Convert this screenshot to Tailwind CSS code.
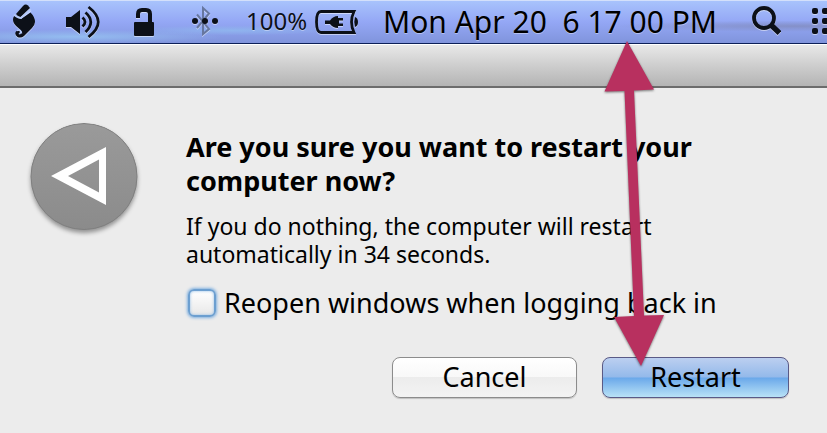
<!DOCTYPE html>
<html lang="en">
<head>
    <meta charset="UTF-8">
    <meta name="viewport" content="width=device-width, initial-scale=1.0">
    <title>Restart</title>
    <script src="https://cdn.jsdelivr.net/npm/@tailwindcss/browser@4"></script>
</head>
<body class="relative min-h-screen flex flex-col overflow-hidden bg-[#ececec] text-black font-['Noto_Sans','Open_Sans',sans-serif]">

    <!-- Menu bar -->
    <header class="flex items-center h-11 shrink-0 overflow-hidden whitespace-nowrap border-t border-t-[#d3e0fb] border-b border-b-[#0c1f58] pl-3 text-[#0c1018] bg-[radial-gradient(ellipse_at_9%_85%,#94bdf0_0%,transparent_14%),radial-gradient(ellipse_at_28%_70%,#8fb4ee_0%,transparent_12%),radial-gradient(ellipse_at_96%_60%,#8490c8_0%,transparent_16%),linear-gradient(to_bottom,#a8c3fc,#94a7f5_50%,#8094dc)]">
        <svg class="w-6 h-9 shrink-0 drop-shadow-[0_1px_0_#ffffff80]" viewBox="12 4 24 36" fill="currentColor" aria-label="Scripts">
            <path d="M16 14 L23 6 Q25.500 3.500 28 5.500 L30 8 L20.500 17 Q17.500 16.500 16 14Z"/>
            <path d="M13 20 Q13 15.500 16 15.500 Q18 18.500 21 19 L30.500 12.500 Q35 17 35 22 Q35 24.500 32 28 L24 36 Q21 38.500 17.500 37 Q14 34.500 16 31.500 Q18.500 29.500 20 32 L18.500 34 Q20 35 21 33.500 Q22.500 31 19 28.500 Q13 24 13 20Z"/>
            <path d="M14 14.500 Q17.500 18.500 21 18 L31 9.500 M17 30.500 Q21.500 29 21.500 33.500" fill="none" stroke="#b4cafb" stroke-width="1.500"/>
        </svg>
        <svg class="w-9 h-9 ml-7 shrink-0 drop-shadow-[0_1px_0_#ffffff80]" viewBox="64 4 36 36" fill="none" stroke="currentColor" stroke-width="2.800" aria-label="Volume">
            <path d="M66 17 H71 L80 10 V34 L71 27 H66Z" fill="currentColor" stroke="none"/>
            <path d="M82.500 17.500 Q87.500 22 82.500 26.500 M85.500 12.500 Q96 22 85.500 32 M88.500 7 Q108 22 88.500 37"/>
        </svg>
        <svg class="w-5 h-9 ml-[34px] shrink-0 drop-shadow-[0_1px_0_#ffffff80]" viewBox="134 4 20 36" fill="none" stroke="currentColor" aria-label="Unlocked">
            <path d="M138 18 V14 Q138 10 142 10 H146 Q150 10 150 14 V23" stroke-width="4"/>
            <rect x="134" y="22" width="20" height="14" rx="1" fill="currentColor" stroke="none"/>
        </svg>
        <svg class="w-7 h-9 ml-9 shrink-0 drop-shadow-[0_1px_0_#ffffff80]" viewBox="190 4 28 36" fill="none" aria-label="Bluetooth">
            <path d="M197 14.500 L209 29 L203 34 V8 L209 13.500 L197 28" stroke="#67779f" stroke-width="2"/>
            <g fill="#0c1018"><circle cx="195" cy="21" r="3"/><circle cx="205" cy="21" r="3"/><circle cx="215" cy="21" r="3"/></g>
        </svg>
        <span class="shrink-0 w-[62px] ml-7 text-[24px] leading-9 pb-0.5 text-shadow-[0_1px_0_#ffffff60]">100%</span>
        <svg class="w-11 h-9 ml-[7px] shrink-0 drop-shadow-[0_1px_0_#ffffff80]" viewBox="315 4 44 36" fill="currentColor" aria-label="Battery charging">
            <path d="M354 11.500 H321 Q316.500 11.500 316.500 22 Q316.500 32.500 321 32.500 H354 Q349 22 354 11.500Z" fill="none" stroke="currentColor" stroke-width="2.800"/>
            <path d="M325 20.500 H330 Q333 16 338 16 V18 H343 V20.500 H339 V23.500 H343 V26 H338 V28 Q333 28 330 24 H325Z"/>
            <path d="M355 17 Q358 18 358 22 Q358 26 355 27 Q353.500 22 355 17Z"/>
        </svg>
        <time class="shrink-0 w-[334px] ml-6 text-[30px] leading-9 text-black whitespace-pre text-shadow-[0_1px_0_#ffffff60]">Mon Apr 20  6 17 00 PM</time>
        <svg class="w-8 h-9 ml-8 shrink-0 drop-shadow-[0_1px_0_#ffffff80]" viewBox="749 4 32 36" fill="none" stroke="currentColor" aria-label="Search">
            <circle cx="764" cy="18" r="10" stroke-width="3.800"/>
            <path d="M771 25 L779.500 33" stroke-width="5.500"/>
        </svg>
        <svg class="w-9 h-9 ml-7 shrink-0 drop-shadow-[0_1px_0_#ffffff80]" viewBox="809 4 36 36" fill="currentColor" aria-label="Notifications">
            <rect x="812" y="8" width="6" height="6" rx="2"/><rect x="822" y="8" width="18" height="6" rx="2"/>
            <rect x="812" y="18" width="6" height="6" rx="2"/><rect x="822" y="18" width="18" height="6" rx="2"/>
            <rect x="812" y="28" width="6" height="6" rx="2"/><rect x="822" y="28" width="18" height="6" rx="2"/>
        </svg>
    </header>

    <!-- Window title bar -->
    <div class="h-11 shrink-0 border-t border-t-white border-b-2 border-b-[#6c6c6c] bg-linear-to-b from-[#e8e8e8] to-[#b4b4b4]"></div>

    <main class="flex pt-[35px] pl-[30px] pr-[38px]">
        <svg class="w-[108px] h-[108px] shrink-0 rounded-full drop-shadow-[0_3px_2px_#00000060]" viewBox="0 0 108 108" aria-label="Restart">
            <defs>
                <linearGradient id="disc" x2="0" y2="1"><stop stop-color="#9a9a9a"/><stop offset="1" stop-color="#8b8b8b"/></linearGradient>
            </defs>
            <circle cx="54" cy="53.500" r="53" fill="url(#disc)" stroke="#7f7f7f"/>
            <path d="M21 53 L76 24 V82Z M38 53 L69 69.500 V36.500Z" fill="#fff" fill-rule="evenodd"/>
        </svg>
        <form class="flex-1 ml-12 pt-[7px]">
            <h1 class="max-w-[540px] text-[27px] leading-[34px] font-bold">Are you sure you want to restart your computer now?</h1>
            <p class="max-w-[480px] mt-3.5 text-[23px] leading-7">If you do nothing, the computer will restart automatically in 34 seconds.</p>
            <div class="flex items-center gap-2 mt-[17px]">
                <input id="reopen" type="checkbox" class="appearance-none size-7 ml-0.5 rounded-md border-2 border-[#6c9fd0] bg-linear-to-b from-white to-[#e8e8e8] shadow-[0_0_3px_1px_#7fb0e0,inset_0_0_3px_#8fbbe6]">
                <label for="reopen" class="text-[27px] leading-9">Reopen windows when logging back in</label>
            </div>
            <div class="flex justify-end gap-[25px] mt-9">
                <button type="button" class="w-[185px] h-[41px] pb-0.5 rounded-lg border border-[#8c8c8c] text-[27px] leading-9 bg-[linear-gradient(#fff_0%,#f8f8f8_49%,#ececec_50%,#f3f3f3_100%)] shadow-[0_1px_1px_#00000030]">Cancel</button>
                <button type="submit" class="w-[187px] h-[41px] pb-0.5 rounded-lg border border-[#5a5a86] text-[27px] leading-9 bg-[linear-gradient(#bccff0_0%,#93b9ea_49%,#6aa8ea_51%,#b9e2f6_100%)] shadow-[0_1px_1px_#00000030]">Restart</button>
            </div>
        </form>
    </main>

    <!-- Arrow from the clock down to the Restart button -->
    <svg class="absolute top-10 left-[600px] w-[70px] h-[330px] pointer-events-none drop-shadow-[0_1px_1px_#00000080]" viewBox="600 40 70 330" fill="#b8305f" aria-hidden="true">
        <path d="M627 41 L654 89.500 L634 90.500 L644 315.500 L664 315 L641 366 L614 317 L634 316 L624.500 91 L604.500 91.500Z"/>
    </svg>

</body>
</html>
